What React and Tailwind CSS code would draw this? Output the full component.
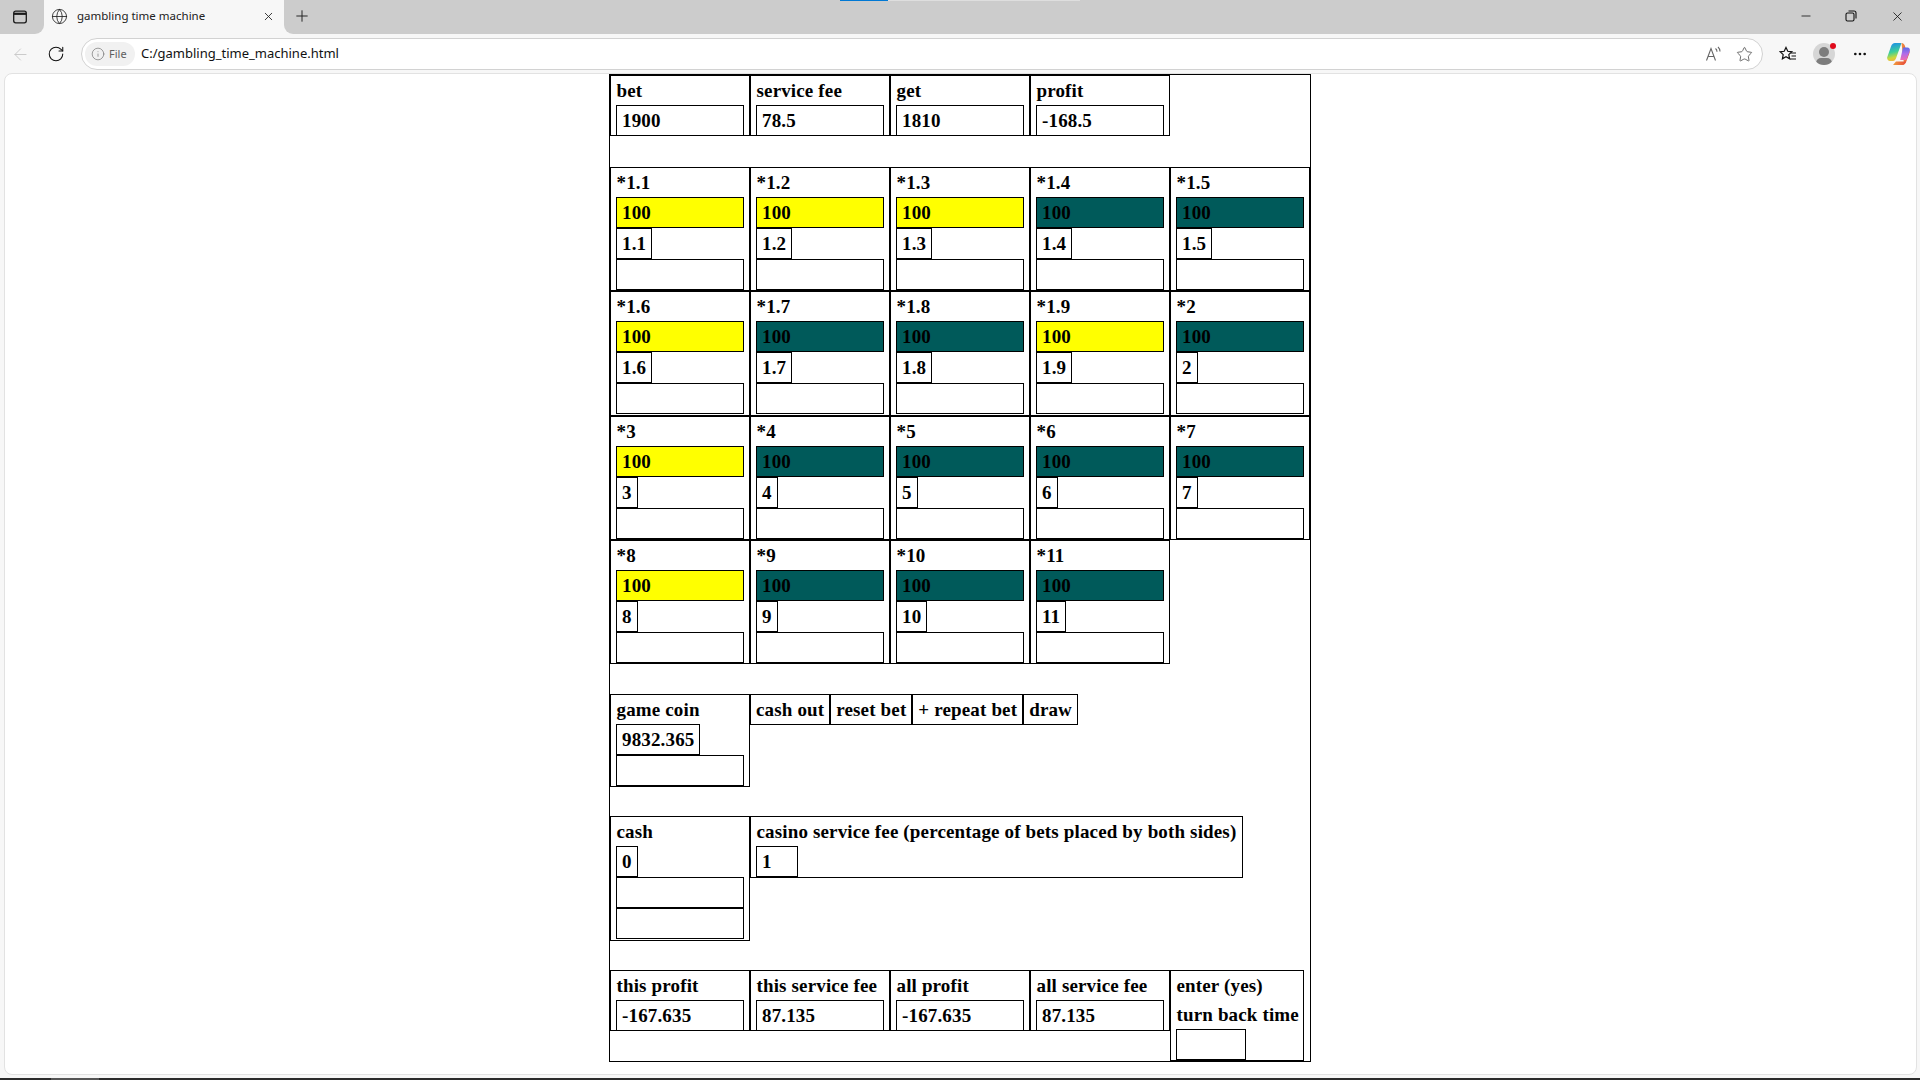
import { Minus, X, Plus, RotateCw, ArrowLeft, Star, Globe, Info, MoreHorizontal } from "lucide-react";

const cellInput = "h-[31px] border border-black pl-[5px] leading-[30px] text-black";

function Box({ value, bg = "bg-white", w = "w-[128px]" }) {
  return <div className={`${cellInput} ${bg} ${w}`}>{value}</div>;
}

function Label({ children }) {
  return <div className="h-[29px] leading-[29px] pl-[0.5px] whitespace-nowrap">{children}</div>;
}

// bet / fee cell on the top row and bottom row
function Stat({ label, value }) {
  return (
    <div className="w-[140px] h-[61px] border border-black pl-[5px] shrink-0">
      <Label>{label}</Label>
      <Box value={value} />
    </div>
  );
}

function BetCell({ n, on, tall }) {
  return (
    <div className={`w-[140px] ${tall ? "h-[125px]" : "h-[124px]"} border border-black pl-[5px] shrink-0`}>
      <Label>*{n}</Label>
      <Box value="100" bg={on ? "bg-[#ffff00]" : "bg-[#005a5a]"} />
      <div className="h-[31px] border border-black px-[5px] leading-[30px] w-fit">{n}</div>
      <Box value="" />
    </div>
  );
}

const rows = [
  [["1.1", 1], ["1.2", 1], ["1.3", 1], ["1.4", 0], ["1.5", 0]],
  [["1.6", 1], ["1.7", 0], ["1.8", 0], ["1.9", 1], ["2", 0]],
  [["3", 1], ["4", 0], ["5", 0], ["6", 0], ["7", 0]],
  [["8", 1], ["9", 0], ["10", 0], ["11", 0]],
];

function TabBar() {
  return (
    <div className="h-[34px] bg-[#f7f7f7] flex relative">
      <div className="absolute left-[840px] top-0 w-[240px] h-px bg-[#dedede]">
        <div className="w-[48px] h-px bg-[#0078d4]" />
      </div>
      <div className="w-[44px] bg-[#cccccc] rounded-br-[9px] flex items-center pl-[12px]">
        <svg width="16" height="16" viewBox="0 0 16 16" fill="none" stroke="#1a1a1a" strokeWidth="1.3">
          <rect x="1.7" y="2.200" width="12.600" height="11.600" rx="2" />
          <path d="M2 4.800h12" strokeWidth="2.200" />
        </svg>
      </div>
      <div className="w-[240px] bg-[#f7f7f7] rounded-t-[10px] flex items-center pl-[7px] pr-[9px] pb-[2px]">
        <Globe size={17} strokeWidth={1.2} color="#222" />
        <span className="ml-[9px] font-['Noto_Sans'] text-[11.500px] text-[#222] grow">gambling time machine</span>
        <X size={13} strokeWidth={1.6} color="#222" />
      </div>
      <div className="grow bg-[#cccccc] rounded-bl-[9px] flex items-center">
        <div className="w-[36px] flex justify-center pb-[2px]">
          <Plus size={18} strokeWidth={1.300} color="#222" />
        </div>
        <div className="grow" />
        <div className="flex items-center text-[#111] pb-[2px]">
          <div className="w-[45px] flex justify-center"><Minus size={14} strokeWidth={1.4} /></div>
          <div className="w-[46px] flex justify-center">
            <svg width="12" height="12" viewBox="0 0 12 12" fill="none" stroke="#111" strokeWidth="1.100">
              <rect x="1" y="3" width="8" height="8" rx="1.500" />
              <path d="M3.500 1h5.500a2 2 0 0 1 2 2v5.500" />
            </svg>
          </div>
          <div className="w-[46px] flex justify-center"><X size={15} strokeWidth={1.3} /></div>
        </div>
      </div>
    </div>
  );
}

function ToolBar() {
  return (
    <div className="h-[39px] pt-px bg-[#f7f7f7] flex items-center">
      <div className="w-[40px] flex justify-center"><ArrowLeft size={19} strokeWidth={1.1} color="#c4c4c4" /></div>
      <div className="w-[32px] flex justify-center"><RotateCw size={18} strokeWidth={1.4} color="#111" /></div>
      <div className="ml-[9px] w-[1682px] h-[32px] bg-white border border-[#d2d2d2] rounded-full flex items-center pl-[3px] pr-[9px]">
        <div className="h-[24px] w-[50px] bg-[#f1f1f1] rounded-full flex items-center pl-[6px] gap-[4px]">
          <Info size={14} strokeWidth={1.1} color="#6a6a6a" />
          <span className="font-['Noto_Sans'] text-[11px] text-[#5e5e5e]">File</span>
        </div>
        <span className="ml-[6px] font-['Noto_Sans'] text-[13px] text-[#111] grow">C:/gambling_time_machine.html</span>
        <svg className="mr-[13px]" width="18" height="18" viewBox="0 0 18 18" fill="none" stroke="#666" strokeWidth="1.100">
          <path d="M1.500 15.500L6 3.500l4.500 12M3 11.500h6" />
          <path d="M10.500 3.500c1 .8 1.500 2 1.500 3.200M13 2c1.300 1.200 2 2.800 2 4.500" />
        </svg>
        <Star size={17} strokeWidth={1.2} color="#555" />
      </div>
      <div className="w-[40px] ml-[5px] flex justify-center">
        <svg width="18" height="16" viewBox="0 0 18 16" fill="none" stroke="#111" strokeWidth="1.200">
          <path d="M7 1.500l1.800 3.800 4 .5-3 2.800.8 4.200L7 10.700l-3.600 2.100.8-4.200-3-2.800 4-.5z" />
          <path d="M12 7h5M12.500 10h4.500M11 13h6" />
        </svg>
      </div>
      <div className="w-[32px] flex justify-center relative">
        <div className="w-[22px] h-[22px] rounded-full bg-[#d6d6d6] overflow-hidden relative">
          <div className="absolute left-[6px] top-[4px] w-[10px] h-[10px] rounded-full bg-[#7d7d7d]" />
          <div className="absolute left-[3px] top-[15px] w-[16px] h-[10px] rounded-full bg-[#7d7d7d]" />
        </div>
        <div className="absolute left-[22px] top-0 w-[6px] h-[6px] rounded-full bg-[#e00b1c]" />
      </div>
      <div className="w-[40px] flex justify-center"><MoreHorizontal size={16} strokeWidth={2} color="#111" /></div>
      <div className="w-[36px] flex justify-center">
        <svg width="23" height="22" viewBox="0 0 23 22">
          <defs>
            <linearGradient id="cpA" x1="0.300" y1="0" x2="0.500" y2="1">
              <stop offset="0" stopColor="#1c8fe8" />
              <stop offset="0.500" stopColor="#3ccf9a" />
              <stop offset="0.800" stopColor="#c9d83c" />
              <stop offset="1" stopColor="#f5b43c" />
            </linearGradient>
            <linearGradient id="cpB" x1="0.500" y1="0" x2="0.500" y2="1">
              <stop offset="0" stopColor="#5b6be8" />
              <stop offset="0.500" stopColor="#b06be8" />
              <stop offset="1" stopColor="#f06bb0" />
            </linearGradient>
            <linearGradient id="cpC" x1="0" y1="0" x2="1" y2="0">
              <stop offset="0" stopColor="#f0a03c" />
              <stop offset="1" stopColor="#e8483c" />
            </linearGradient>
          </defs>
          <path d="M8 0h6.500l-5 14c-.7 2-1.600 4-3.500 4H3C.8 18-.3 16 .3 14L4 3.500C4.700 1.300 6 0 8 0z" fill="url(#cpA)" />
          <path d="M14.500 0c2 0 3 1.300 3.600 3.500l.6 2.500H20c2 0 3 2 2.500 3.700L19.500 18c-.7 2.200-2 4-4 4H13c2 0 3-1.500 3.700-3.500z" fill="url(#cpC)" />
          <path d="M16 4.500h4.500c1.800 0 2.800 1.700 2.200 3.500L19.500 17H13.200z" fill="url(#cpB)" />
          <path d="M6 22h9c2 0 3.300-1.500 4-3.500H9z" fill="url(#cpC)" />
        </svg>
      </div>
    </div>
  );
}

export default function App() {
  return (
    <div className="w-[1920px] h-[1080px] overflow-hidden bg-[#f7f7f7] flex flex-col font-['Liberation_Serif',serif]">
      <TabBar />
      <ToolBar />
      <div className="w-[1913px] h-[1002px] ml-[4px] mb-[3px] shrink-0 bg-white rounded-[8px] border border-[#e2e2e2] pl-[604px] text-[19px] tracking-[0.15px] font-bold text-black">
        <div className="w-[702px] h-[988px] border border-black">
          <div className="flex">
            <Stat label="bet" value="1900" />
            <Stat label="service fee" value="78.5" />
            <Stat label="get" value="1810" />
            <Stat label="profit" value="-168.5" />
          </div>
          <div className="h-[31px]" />
          {rows.map((row, i) => (
            <div key={i} className="flex">
              {row.map(([n, on]) => <BetCell key={n} n={n} on={on} tall={i === 1} />)}
            </div>
          ))}
          <div className="h-[30px]" />
          <div className="flex items-start">
            <div className="w-[140px] h-[93px] border border-black pl-[5px]">
              <Label>game coin</Label>
              <div className="h-[31px] w-fit border border-black px-[5px] leading-[30px]">9832.365</div>
              <Box value="" />
            </div>
            {["cash out", "reset bet", "+ repeat bet", "draw"].map(b => (
              <div key={b} className="h-[31px] border border-black px-[5px] leading-[29px] whitespace-nowrap">{b}</div>
            ))}
          </div>
          <div className="h-[29px]" />
          <div className="flex items-start">
            <div className="w-[140px] h-[125px] border border-black pl-[5px]">
              <Label>cash</Label>
              <div className="h-[31px] w-fit border border-black px-[5px] leading-[30px]">0</div>
              <Box value="" />
              <Box value="" />
            </div>
            <div className="w-[493px] h-[62px] border border-black pl-[5px]">
              <Label>casino service fee (percentage of bets placed by both sides)</Label>
              <div className="h-[31px] w-[42px] border border-black pl-[5px] leading-[30px]">1</div>
            </div>
          </div>
          <div className="h-[29px]" />
          <div className="flex items-start">
            <Stat label="this profit" value="-167.635" />
            <Stat label="this service fee" value="87.135" />
            <Stat label="all profit" value="-167.635" />
            <Stat label="all service fee" value="87.135" />
            <div className="w-[134px] h-[91px] border border-black pl-[5px]">
              <Label>enter (yes)</Label>
              <Label>turn back time</Label>
              <div className="h-[31px] w-[70px] border border-black" />
            </div>
          </div>
        </div>
      </div>
      <div className="h-[2px] bg-[#2b2b2b] flex shrink-0">
        <div className="ml-[51px] w-[48px] bg-[#555555]" />
      </div>
    </div>
  );
}
